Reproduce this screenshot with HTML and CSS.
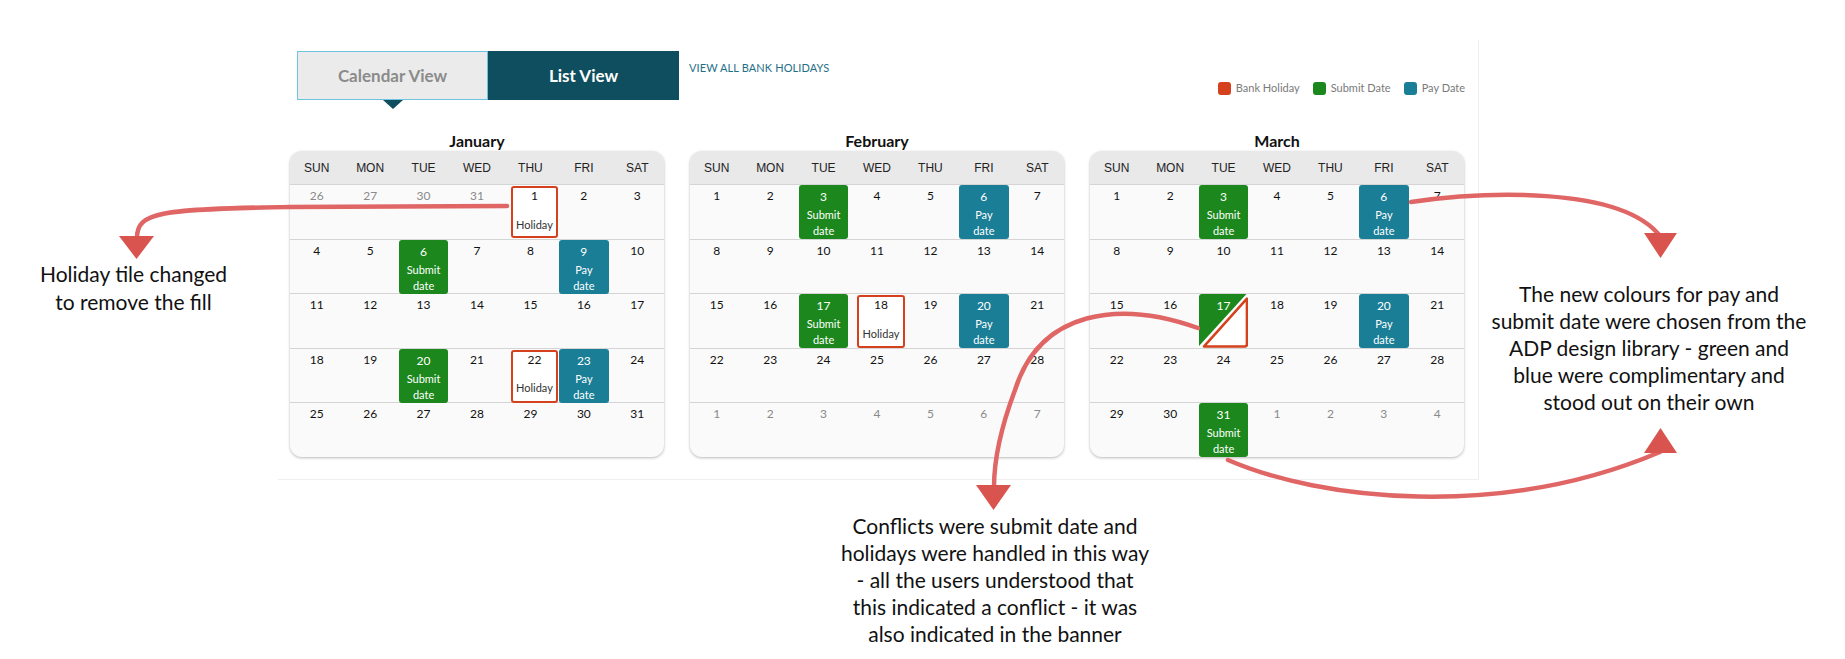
FILE: index.html
```html
<!DOCTYPE html>
<html lang="en">
<head>
<meta charset="utf-8">
<title>Calendar annotations</title>
<link rel="stylesheet" href="styles.css">
</head>
<body>
<div class="page">
  <div class="panel">
    <div class="toolbar">
      <div class="tabs">
        <div class="tab tab-cal">Calendar View</div>
        <div class="tab tab-list">List View</div>
      </div>
      <a class="bank-link">VIEW ALL BANK HOLIDAYS</a>
      <div class="legend">
        <span class="swatch sw-hol"></span><span class="legend-label">Bank Holiday</span>
        <span class="swatch sw-sub"></span><span class="legend-label">Submit Date</span>
        <span class="swatch sw-pay"></span><span class="legend-label">Pay Date</span>
      </div>
    </div>
    <div class="pointer"></div>
    <div class="months">
      <section class="month">
        <h2 class="month-title">January</h2>
        <div class="cal">
          <div class="dow"><span>SUN</span><span>MON</span><span>TUE</span><span>WED</span><span>THU</span><span>FRI</span><span>SAT</span></div>
          <div class="week">
            <div class="d o">26</div><div class="d o">27</div><div class="d o">30</div><div class="d o">31</div>
            <div class="d hol"><span class="n">1</span><span class="l">Holiday</span></div>
            <div class="d">2</div><div class="d">3</div>
          </div>
          <div class="week">
            <div class="d">4</div><div class="d">5</div>
            <div class="d sub"><span class="n">6</span><span class="l">Submit<br>date</span></div>
            <div class="d">7</div><div class="d">8</div>
            <div class="d pay"><span class="n">9</span><span class="l">Pay<br>date</span></div>
            <div class="d">10</div>
          </div>
          <div class="week">
            <div class="d">11</div><div class="d">12</div><div class="d">13</div><div class="d">14</div><div class="d">15</div><div class="d">16</div><div class="d">17</div>
          </div>
          <div class="week">
            <div class="d">18</div><div class="d">19</div>
            <div class="d sub"><span class="n">20</span><span class="l">Submit<br>date</span></div>
            <div class="d">21</div>
            <div class="d hol"><span class="n">22</span><span class="l">Holiday</span></div>
            <div class="d pay"><span class="n">23</span><span class="l">Pay<br>date</span></div>
            <div class="d">24</div>
          </div>
          <div class="week">
            <div class="d">25</div><div class="d">26</div><div class="d">27</div><div class="d">28</div><div class="d">29</div><div class="d">30</div><div class="d">31</div>
          </div>
        </div>
      </section>

      <section class="month">
        <h2 class="month-title">February</h2>
        <div class="cal">
          <div class="dow"><span>SUN</span><span>MON</span><span>TUE</span><span>WED</span><span>THU</span><span>FRI</span><span>SAT</span></div>
          <div class="week">
            <div class="d">1</div><div class="d">2</div>
            <div class="d sub"><span class="n">3</span><span class="l">Submit<br>date</span></div>
            <div class="d">4</div><div class="d">5</div>
            <div class="d pay"><span class="n">6</span><span class="l">Pay<br>date</span></div>
            <div class="d">7</div>
          </div>
          <div class="week">
            <div class="d">8</div><div class="d">9</div><div class="d">10</div><div class="d">11</div><div class="d">12</div><div class="d">13</div><div class="d">14</div>
          </div>
          <div class="week">
            <div class="d">15</div><div class="d">16</div>
            <div class="d sub"><span class="n">17</span><span class="l">Submit<br>date</span></div>
            <div class="d hol"><span class="n">18</span><span class="l">Holiday</span></div>
            <div class="d">19</div>
            <div class="d pay"><span class="n">20</span><span class="l">Pay<br>date</span></div>
            <div class="d">21</div>
          </div>
          <div class="week">
            <div class="d">22</div><div class="d">23</div><div class="d">24</div><div class="d">25</div><div class="d">26</div><div class="d">27</div><div class="d">28</div>
          </div>
          <div class="week">
            <div class="d o">1</div><div class="d o">2</div><div class="d o">3</div><div class="d o">4</div><div class="d o">5</div><div class="d o">6</div><div class="d o">7</div>
          </div>
        </div>
      </section>

      <section class="month">
        <h2 class="month-title">March</h2>
        <div class="cal">
          <div class="dow"><span>SUN</span><span>MON</span><span>TUE</span><span>WED</span><span>THU</span><span>FRI</span><span>SAT</span></div>
          <div class="week">
            <div class="d">1</div><div class="d">2</div>
            <div class="d sub"><span class="n">3</span><span class="l">Submit<br>date</span></div>
            <div class="d">4</div><div class="d">5</div>
            <div class="d pay"><span class="n">6</span><span class="l">Pay<br>date</span></div>
            <div class="d">7</div>
          </div>
          <div class="week">
            <div class="d">8</div><div class="d">9</div><div class="d">10</div><div class="d">11</div><div class="d">12</div><div class="d">13</div><div class="d">14</div>
          </div>
          <div class="week">
            <div class="d">15</div><div class="d">16</div>
            <div class="d conf">
              <svg class="conf-bg" viewBox="0 0 49 52" preserveAspectRatio="none">
                <path d="M3 0 H47 L0 50 V3 Q0 0 3 0 Z" fill="#1b871c"/>
                <path d="M5 50.5 L47.5 4.5 V48.5 Q47.5 50.5 45.5 50.5 Z" fill="#ffffff" stroke="#d5411c" stroke-width="2.5" stroke-linejoin="round"/>
              </svg>
              <span class="n">17</span>
            </div>
            <div class="d">18</div><div class="d">19</div>
            <div class="d pay"><span class="n">20</span><span class="l">Pay<br>date</span></div>
            <div class="d">21</div>
          </div>
          <div class="week">
            <div class="d">22</div><div class="d">23</div><div class="d">24</div><div class="d">25</div><div class="d">26</div><div class="d">27</div><div class="d">28</div>
          </div>
          <div class="week">
            <div class="d">29</div><div class="d">30</div>
            <div class="d sub"><span class="n">31</span><span class="l">Submit<br>date</span></div>
            <div class="d o">1</div><div class="d o">2</div><div class="d o">3</div><div class="d o">4</div>
          </div>
        </div>
      </section>
    </div>
  </div>

  <p class="note note-left">Holiday tile changed<br>to remove the fill</p>
  <p class="note note-right">The new colours for pay and<br>submit date were chosen from the<br>ADP design library - green and<br>blue were complimentary and<br>stood out on their own</p>
  <p class="note note-mid">Conflicts were submit date and<br>holidays were handled in this way<br>- all the users understood that<br>this indicated a conflict - it was<br>also indicated in the banner</p>

  <svg class="arrows" width="1845" height="659" viewBox="0 0 1845 659">
    <g fill="none" stroke="#e06666" stroke-width="4.5" stroke-linecap="round">
      <path d="M507 206 L290 207 C160 209 137 212 137 238"/>
      <path d="M1411 202 C1480 192 1620 185 1660 236"/>
      <path d="M1228 460 C1320 500 1500 520 1660 452"/>
      <path d="M1198 328 C1120 300 1040 310 1015 390 C1000 430 994 460 994 487"/>
    </g>
    <g fill="#d9534f">
      <polygon points="119,236 154,236 136.5,259"/>
      <polygon points="1644,233 1677,233 1660.5,258"/>
      <polygon points="1644,453 1677,453 1660.5,428"/>
      <polygon points="976,485 1011,485 993.5,510"/>
    </g>
  </svg>
</div>
</body>
</html>
```

FILE: styles.css
```css
html, body {
  margin: 0;
  padding: 0;
  background: #ffffff;
}

.page {
  position: relative;
  width: 1845px;
  height: 659px;
  overflow: hidden;
  font-family: Lato, "Liberation Sans", sans-serif;
}

.panel {
  margin: 40px 0 0 278px;
  width: 1201px;
  height: 440px;
  box-sizing: border-box;
  padding-top: 11px;
  border-right: 1px solid #eeeeee;
  border-bottom: 1px solid #f0f0f0;
}

.toolbar {
  display: flex;
  align-items: flex-start;
  padding: 0 13px 0 19px;
  height: 49px;
}

.tabs {
  display: flex;
}

.tab {
  width: 191px;
  height: 49px;
  box-sizing: border-box;
  display: flex;
  align-items: center;
  justify-content: center;
  font: 700 17px/20px Lato, sans-serif;
}

.tab-cal {
  background: #ebebeb;
  border: 1px solid #6ec4de;
  color: #8b8b8b;
}

.tab-list {
  background: #0e4e5e;
  color: #ffffff;
}

.bank-link {
  margin: 10px 0 0 10px;
  font: 11px/14px Lato, sans-serif;
  color: #1f6f88;
  letter-spacing: 0.1px;
}

.legend {
  margin: 30px 0 0 auto;
  display: flex;
  align-items: center;
  font: 11px/14px Lato, sans-serif;
  color: #7a7a7a;
}

.swatch {
  width: 13px;
  height: 13px;
  border-radius: 3px;
  margin: 0 5px 0 13px;
}

.swatch:first-child {
  margin-left: 0;
}

.sw-hol { background: #d5411c; }
.sw-sub { background: #1b871c; }
.sw-pay { background: #197e96; }

.pointer {
  margin-left: 105px;
  width: 0;
  height: 0;
  border-left: 10px solid transparent;
  border-right: 10px solid transparent;
  border-top: 9px solid #0e4e5e;
}

.months {
  display: flex;
  gap: 26px;
  padding-left: 12px;
  margin-top: 22px;
}

.month {
  width: 374px;
}

.month-title {
  margin: 0;
  text-align: center;
  font: 700 16px/20px Lato, sans-serif;
  color: #111111;
}

.cal {
  background: #fafafa;
  border-radius: 12px;
  box-shadow: 0 1px 3px rgba(0, 0, 0, 0.28);
  overflow: hidden;
}

.dow {
  display: grid;
  grid-template-columns: repeat(7, 1fr);
  align-items: center;
  height: 33px;
  background: #e9e9e9;
  font: 12px/14px "Liberation Sans", Arial, sans-serif;
  color: #222222;
  text-align: center;
}

.week {
  display: grid;
  grid-template-columns: repeat(7, 1fr);
  height: 54.6px;
  box-sizing: border-box;
  border-top: 1px solid #d4d4d4;
}

.d {
  box-sizing: border-box;
  padding-top: 4px;
  text-align: center;
  font: 12px/14px Lato, sans-serif;
  color: #111111;
}

.d.o {
  color: #8a8a8a;
}

.sub, .pay {
  margin: 0 2px 1px;
  padding-top: 5px;
  border-radius: 3px;
  color: #ffffff;
  display: flex;
  flex-direction: column;
  align-items: center;
}

.sub { background: #1b871c; }
.pay { background: #197e96; }

.sub .l, .pay .l {
  margin-top: 3px;
  font-size: 11px;
  line-height: 16px;
}

.hol {
  margin: 1px -1px 1px 7px;
  padding-top: 1px;
  border: 2.5px solid #d5411c;
  border-radius: 3px;
  background: #ffffff;
  display: flex;
  flex-direction: column;
  align-items: center;
}

.hol .l {
  margin-top: 14.5px;
  font-size: 11px;
  line-height: 14px;
  color: #333333;
}

.conf {
  position: relative;
  margin: 0 2px 1px;
  padding-top: 5px;
  color: #ffffff;
}

.conf-bg {
  position: absolute;
  left: 0;
  top: 0;
  width: 100%;
  height: 100%;
}

.conf .n {
  position: relative;
}

.note {
  position: absolute;
  margin: 0;
  text-align: center;
  font: 21px/27px Lato, sans-serif;
  color: #111111;
}

.note-left {
  left: 0;
  top: 260px;
  width: 267px;
  line-height: 28px;
}

.note-right {
  left: 1459px;
  top: 280px;
  width: 380px;
}

.note-mid {
  left: 805px;
  top: 512px;
  width: 380px;
}

.arrows {
  position: absolute;
  left: 0;
  top: 0;
  pointer-events: none;
}
```
